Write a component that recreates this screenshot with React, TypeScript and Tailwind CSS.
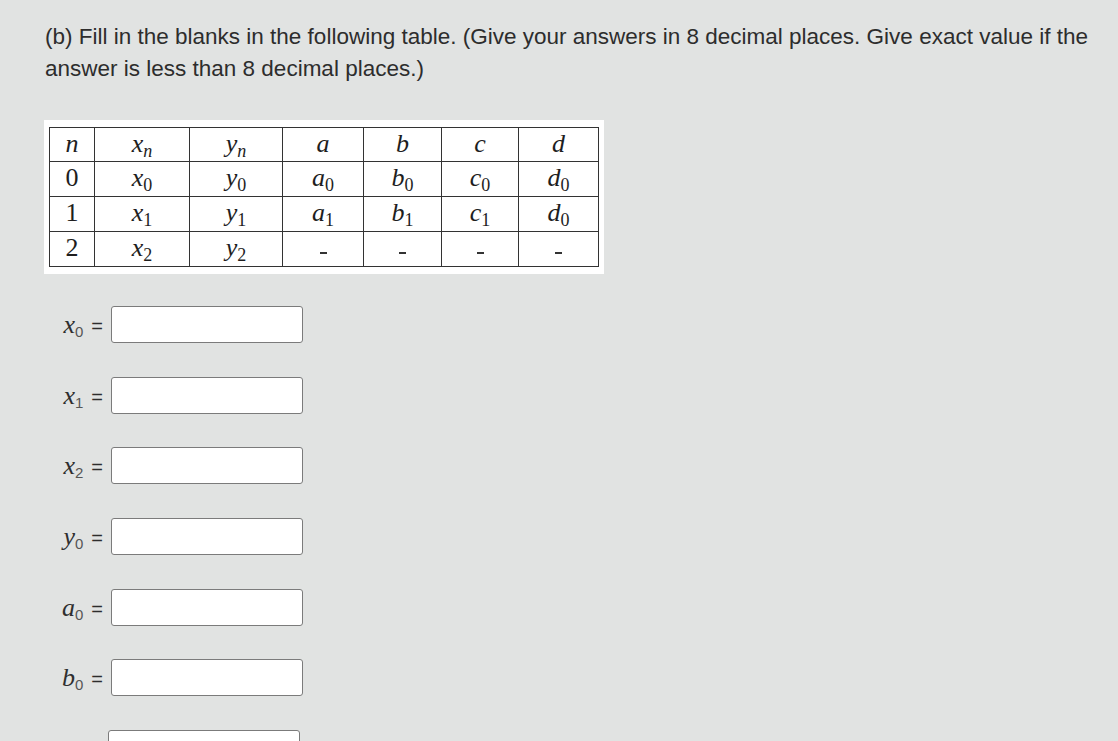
import React from 'react'

type Cell = { v: string; sub?: string; subItalic?: boolean; italic?: boolean; dash?: boolean }

const serif = "font-['Liberation_Serif','DejaVu_Serif',serif]"
const sans = "font-['Liberation_Sans',Arial,sans-serif]"

const header: Cell[] = [
  { v: 'n', italic: true },
  { v: 'x', sub: 'n', subItalic: true, italic: true },
  { v: 'y', sub: 'n', subItalic: true, italic: true },
  { v: 'a', italic: true },
  { v: 'b', italic: true },
  { v: 'c', italic: true },
  { v: 'd', italic: true },
]

const rows: Cell[][] = [
  [
    { v: '0' },
    { v: 'x', sub: '0', italic: true },
    { v: 'y', sub: '0', italic: true },
    { v: 'a', sub: '0', italic: true },
    { v: 'b', sub: '0', italic: true },
    { v: 'c', sub: '0', italic: true },
    { v: 'd', sub: '0', italic: true },
  ],
  [
    { v: '1' },
    { v: 'x', sub: '1', italic: true },
    { v: 'y', sub: '1', italic: true },
    { v: 'a', sub: '1', italic: true },
    { v: 'b', sub: '1', italic: true },
    { v: 'c', sub: '1', italic: true },
    { v: 'd', sub: '0', italic: true },
  ],
  [
    { v: '2' },
    { v: 'x', sub: '2', italic: true },
    { v: 'y', sub: '2', italic: true },
    { v: '', dash: true },
    { v: '', dash: true },
    { v: '', dash: true },
    { v: '', dash: true },
  ],
]

const colWidths = ['w-[45px]', 'w-[95px]', 'w-[93px]', 'w-[81px]', 'w-[78px]', 'w-[77px]', 'w-[80px]']

function MathCell({ cell }: { cell: Cell }) {
  if (cell.dash) {
    return <span className="inline-block w-[7px] h-[2px] bg-[#333] align-middle translate-y-[3px]" />
  }
  return (
    <span className={`inline-block ${serif} text-[26px] leading-none text-[#1e1e1e]`}>
      <span className={cell.italic ? 'italic' : ''}>{cell.v}</span>
      {cell.sub && (
        <span className={`text-[18px] relative top-[5px] ${cell.subItalic ? 'italic' : ''}`}>{cell.sub}</span>
      )}
    </span>
  )
}

function AnswerRow({ letter, sub }: { letter?: string; sub?: string }) {
  return (
    <div className="flex">
      <div className="w-[58px] h-[37px] leading-[37px] text-right whitespace-nowrap text-[#2f2f2f]">
        {letter && (
          <>
            <span className={`${serif} italic text-[26px]`}>{letter}</span>
            <span className={`${sans} text-[15px] relative top-[4px] text-[#555]`}>{sub}</span>
            <span className={`${sans} text-[20px] ml-[8px] text-[#2d2d2d]`}>=</span>
          </>
        )}
      </div>
      <div
        className={`${letter ? 'ml-[8px]' : 'ml-[5px]'} w-[192px] h-[37px] bg-white border border-[#7b7b7b] rounded-[3px]`}
      />
    </div>
  )
}

export default function App() {
  return (
    <div className={`min-h-screen bg-[#e1e3e2] pl-[45px] pr-[20px] pt-[21px] ${sans} text-[#2d2d2d]`}>
      <p className="text-[22.5px] leading-[32px]">
        (b) Fill in the blanks in the following table. (Give your answers in 8 decimal places. Give exact value if the
        answer is less than 8 decimal places.)
      </p>

      <div className="mt-[35px] -ml-[1px] w-[560px] bg-white pl-[5px] pr-[5px] pt-[7px] pb-[7px]">
        <table className="table-fixed border-collapse w-[550px] border border-[#333]">
          <colgroup>
            {colWidths.map((w, i) => (
              <col key={i} className={w} />
            ))}
          </colgroup>
          <tbody>
            <tr className="h-[34px]">
              {header.map((c, i) => (
                <td key={i} className="border border-[#333] text-center p-0">
                  <MathCell cell={c} />
                </td>
              ))}
            </tr>
            {rows.map((r, ri) => (
              <tr key={ri} className="h-[35px]">
                {r.map((c, i) => (
                  <td key={i} className="border border-[#333] text-center p-0">
                    <MathCell cell={c} />
                  </td>
                ))}
              </tr>
            ))}
          </tbody>
        </table>
      </div>

      <div className="mt-[32px] flex flex-col gap-[33.7px] pb-8">
        <AnswerRow letter="x" sub="0" />
        <AnswerRow letter="x" sub="1" />
        <AnswerRow letter="x" sub="2" />
        <AnswerRow letter="y" sub="0" />
        <AnswerRow letter="a" sub="0" />
        <AnswerRow letter="b" sub="0" />
        <AnswerRow />
      </div>
    </div>
  )
}
